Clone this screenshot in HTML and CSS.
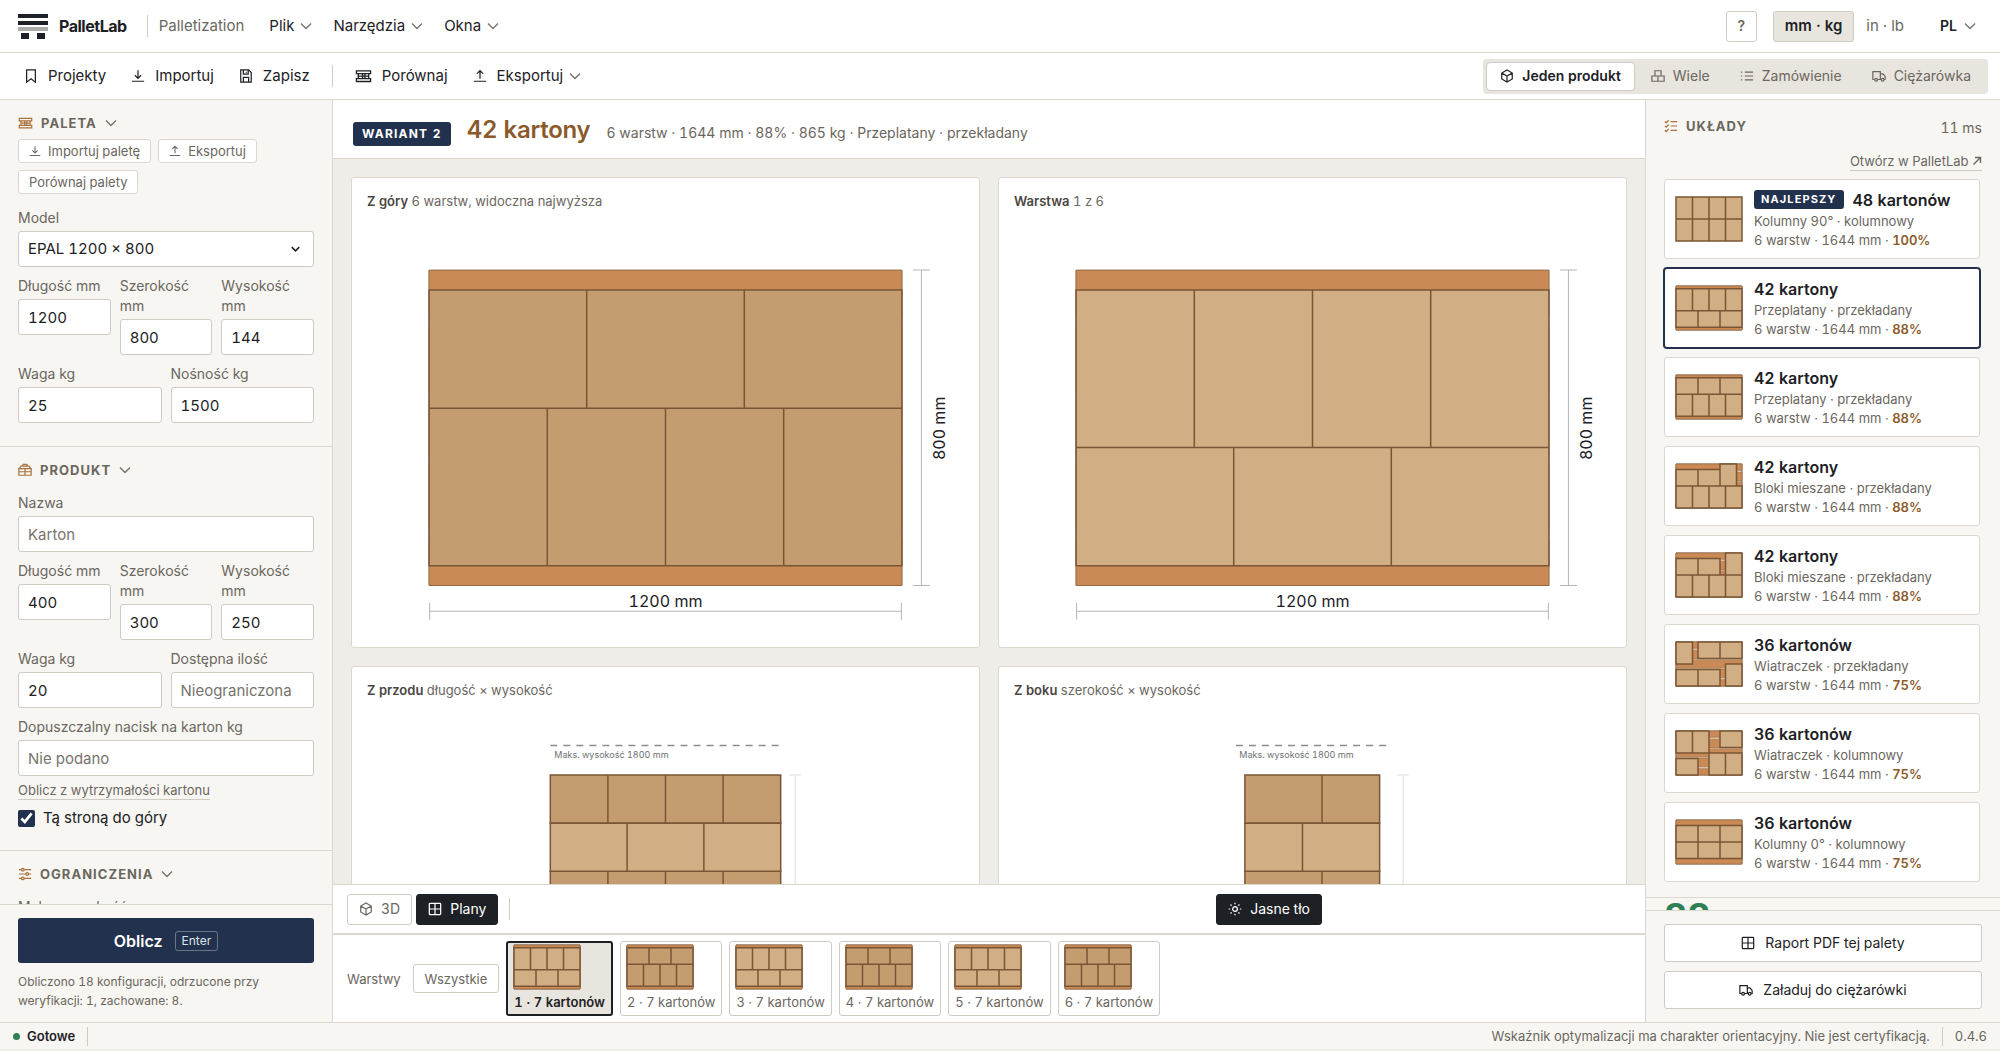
FILE: index.html
```html
<!DOCTYPE html>
<html lang="pl">
<head>
<meta charset="utf-8">
<title>PalletLab</title>
<meta name="viewport" content="width=device-width, initial-scale=1">
<link rel="stylesheet" href="styles.css">
</head>
<body>
<svg class="defs" aria-hidden="true">
  <symbol id="i-chevron" viewBox="0 0 12 8"><path d="M1 1.500 6 6.500 11 1.500"/></symbol>
  <symbol id="i-bookmark" viewBox="0 0 16 16"><path d="M3 1h10v14l-5-3.800L3 15z"/></symbol>
  <symbol id="i-download" viewBox="0 0 16 16"><path d="M8 1.500v9M4.500 7.200 8 10.700l3.500-3.500M1 14h14"/></symbol>
  <symbol id="i-upload" viewBox="0 0 16 16"><path d="M8 11V2M4.500 5.300 8 1.800l3.500 3.500M1 14h14"/></symbol>
  <symbol id="i-save" viewBox="0 0 16 16"><path d="M2 1h9l3 3v11H2zM5 1.300v4.500h5.500v-4.500M8.300 3v1.200M5 14.700V9.500h6v5.200"/></symbol>
  <symbol id="i-pallet" viewBox="0 0 18 14"><path d="M1.500 1.500h15v3h-15zM1.500 9.800h15v3h-15zM3.500 4.500v5.300M8 4.500v5.300M10.500 4.500v5.300M14.500 4.500v5.300M3.500 7.200h11"/></symbol>
  <symbol id="i-product" viewBox="0 0 16 16"><path d="M1 6.500h14V14H1zM1.500 6.500 3.500 3.500h9l2 3M5 3.500 6 1.500h4l1 2M8 6.500V14M1 10h14"/></symbol>
  <symbol id="i-sliders" viewBox="0 0 16 16"><path d="M1 3h3M7 3h8M1 8h8M12 8h3M1 13h3M7 13h8"/><circle cx="5.500" cy="3" r="1.500"/><circle cx="10.500" cy="8" r="1.500"/><circle cx="5.500" cy="13" r="1.500"/></symbol>
  <symbol id="i-cube" viewBox="0 0 16 16"><path d="M8 1.200 14 4.600v6.800L8 14.800 2 11.400V4.600zM2 4.600 8 8l6-3.400M8 8v6.800"/></symbol>
  <symbol id="i-boxes" viewBox="0 0 16 16"><path d="M4.500 2h7v6h-7zM1 8h7v6H1zM8 8h7v6H8z"/></symbol>
  <symbol id="i-list" viewBox="0 0 16 16"><path d="M5.500 3.500H15M5.500 8H15M5.500 12.500H15M1 3.500h1.500M1 8h1.500M1 12.500h1.500"/></symbol>
  <symbol id="i-checks" viewBox="0 0 16 16"><path d="M7.500 3H15M7.500 8H15M7.500 13H15M1 2.800l1.500 1.500L5.500 1.300M1 7.800l1.500 1.500 3-3M1 12.800l1.500 1.500 3-3"/></symbol>
  <symbol id="i-truck" viewBox="0 0 16 16"><path d="M3 12H1V3h8.500v9H6.500M9.500 5.500h3L15 8.500V12h-1M10.500 12h-1"/><circle cx="4.700" cy="12.300" r="1.600"/><circle cx="12.200" cy="12.300" r="1.600"/></symbol>
  <symbol id="i-grid" viewBox="0 0 16 16"><path d="M2.500 1.500h11q1 0 1 1v11q0 1-1 1h-11q-1 0-1-1v-11q0-1 1-1zM8 1.500v13M1.500 8h13"/></symbol>
  <symbol id="i-sun" viewBox="0 0 16 16"><circle cx="8" cy="8" r="2.700"/><path d="M8 .8v1.700M8 13.500v1.700M.8 8h1.700M13.500 8h1.700M2.900 2.900l1.200 1.200M11.900 11.900l1.200 1.200M2.900 13.100l1.200-1.200M11.900 4.100l1.200-1.200"/></symbol>
  <symbol id="i-out" viewBox="0 0 10 10"><path d="M1.500 8.500l7-7M3 1.500h5.500V7"/></symbol>

  <symbol id="deck" viewBox="0 0 1200 800" overflow="visible">
    <g class="gap"><path d="M0 0h1200v800H0z"/></g>
    <g class="board"><path d="M0 0h1200v115H0zM0 148h1200v160H0zM0 330h1200v140H0zM0 492h1200v160H0zM0 685h1200v115H0z"/></g>
  </symbol>
  <symbol id="lay-43" viewBox="0 0 1200 800" overflow="visible">
    <use href="#deck" width="1200" height="800"/>
    <path class="tile" d="M0 50h300v400H0zM300 50h300v400H300zM600 50h300v400H600zM900 50h300v400H900zM0 450h400v300H0zM400 450h400v300H400zM800 450h400v300H800z"/>
  </symbol>
  <symbol id="lay-34" viewBox="0 0 1200 800" overflow="visible">
    <use href="#deck" width="1200" height="800"/>
    <path class="tile" d="M0 50h400v300H0zM400 50h400v300H400zM800 50h400v300H800zM0 350h300v400H0zM300 350h300v400H300zM600 350h300v400H600zM900 350h300v400H900z"/>
  </symbol>
  <symbol id="lay-col90" viewBox="0 0 1200 800" overflow="visible">
    <path class="tile" d="M0 0h300v400H0zM300 0h300v400H300zM600 0h300v400H600zM900 0h300v400H900zM0 400h300v400H0zM300 400h300v400H300zM600 400h300v400H600zM900 400h300v400H900z"/>
  </symbol>
  <symbol id="lay-mixa" viewBox="0 0 1200 800" overflow="visible">
    <use href="#deck" width="1200" height="800"/>
    <path class="tile" d="M0 100h400v300H0zM400 100h400v300H400zM800 0h300v400H800zM0 400h300v400H0zM300 400h300v400H300zM600 400h300v400H600zM900 400h300v400H900z"/>
  </symbol>
  <symbol id="lay-mixb" viewBox="0 0 1200 800" overflow="visible">
    <use href="#deck" width="1200" height="800"/>
    <path class="tile" d="M0 100h400v300H0zM400 100h400v300H400zM900 0h300v400H900zM0 400h300v400H0zM300 400h300v400H300zM600 400h300v400H600zM900 400h300v400H900z"/>
  </symbol>
  <symbol id="lay-pina" viewBox="0 0 1200 800" overflow="visible">
    <use href="#deck" width="1200" height="800"/>
    <path class="tile" d="M0 0h300v400H0zM400 0h400v300H400zM800 0h400v300H800zM0 500h400v300H0zM400 500h400v300H400zM900 400h300v400H900z"/>
  </symbol>
  <symbol id="lay-pinb" viewBox="0 0 1200 800" overflow="visible">
    <use href="#deck" width="1200" height="800"/>
    <path class="tile" d="M0 0h300v400H0zM300 0h300v400H300zM800 0h400v300H800zM0 500h400v300H0zM600 400h300v400H600zM900 400h300v400H900z"/>
  </symbol>
  <symbol id="lay-col0" viewBox="0 0 1200 800" overflow="visible">
    <use href="#deck" width="1200" height="800"/>
    <path class="tile" d="M0 100h400v300H0zM400 100h400v300H400zM800 100h400v300H800zM0 400h400v300H0zM400 400h400v300H400zM800 400h400v300H800z"/>
  </symbol>
</svg>

<div class="app">
  <header class="topbar">
    <svg class="logo" viewBox="0 0 30 25" aria-hidden="true"><path fill="#1d2125" d="M0 0h30v4H0zM0 7h30v4H0zM3 19h8v6H3zM19 19h8v6h-8z"/><path fill="#aeacab" d="M0 13h30v4H0z"/></svg>
    <strong class="brand">PalletLab</strong>
    <span class="rule brand-rule"></span>
    <span class="product">Palletization</span>
    <nav class="menus">
      <button class="menu">Plik <svg class="chev"><use href="#i-chevron"/></svg></button>
      <button class="menu">Narzędzia <svg class="chev"><use href="#i-chevron"/></svg></button>
      <button class="menu">Okna <svg class="chev"><use href="#i-chevron"/></svg></button>
    </nav>
    <button class="help">?</button>
    <div class="units">
      <button class="unit on">mm · kg</button>
      <button class="unit">in · lb</button>
    </div>
    <div class="lang">
      <select aria-label="Język"><option>PL</option></select>
      <svg class="chev"><use href="#i-chevron"/></svg>
    </div>
  </header>

  <div class="toolbar">
    <button class="tool"><svg class="ic"><use href="#i-bookmark"/></svg>Projekty</button>
    <button class="tool"><svg class="ic"><use href="#i-download"/></svg>Importuj</button>
    <button class="tool"><svg class="ic"><use href="#i-save"/></svg>Zapisz</button>
    <span class="rule"></span>
    <button class="tool"><svg class="ic wide"><use href="#i-pallet"/></svg>Porównaj</button>
    <button class="tool"><svg class="ic"><use href="#i-upload"/></svg>Eksportuj<svg class="chev"><use href="#i-chevron"/></svg></button>
    <div class="modes">
      <button class="mode on"><svg class="ic"><use href="#i-cube"/></svg>Jeden produkt</button>
      <button class="mode"><svg class="ic"><use href="#i-boxes"/></svg>Wiele</button>
      <button class="mode"><svg class="ic"><use href="#i-list"/></svg>Zamówienie</button>
      <button class="mode"><svg class="ic"><use href="#i-truck"/></svg>Ciężarówka</button>
    </div>
  </div>

  <div class="work">
    <aside class="side">
      <form class="side-scroll">
        <section class="group">
          <h2 class="cap"><svg class="ic wide accent"><use href="#i-pallet"/></svg>Paleta<svg class="chev"><use href="#i-chevron"/></svg></h2>
          <div class="minis">
            <button type="button" class="mini"><svg class="ic"><use href="#i-download"/></svg>Importuj paletę</button>
            <button type="button" class="mini"><svg class="ic"><use href="#i-upload"/></svg>Eksportuj</button>
            <button type="button" class="mini">Porównaj palety</button>
          </div>
          <label class="field">Model
            <span class="pick"><select class="box"><option>EPAL 1200 × 800</option></select><svg class="chev"><use href="#i-chevron"/></svg></span>
          </label>
          <div class="cols three">
            <label class="field">Długość mm<input class="box" value="1200"></label>
            <label class="field">Szerokość mm<input class="box" value="800"></label>
            <label class="field">Wysokość mm<input class="box" value="144"></label>
          </div>
          <div class="cols">
            <label class="field">Waga kg<input class="box" value="25"></label>
            <label class="field">Nośność kg<input class="box" value="1500"></label>
          </div>
        </section>
        <section class="group">
          <h2 class="cap"><svg class="ic accent"><use href="#i-product"/></svg>Produkt<svg class="chev"><use href="#i-chevron"/></svg></h2>
          <label class="field">Nazwa<input class="box" placeholder="Karton"></label>
          <div class="cols three">
            <label class="field">Długość mm<input class="box" value="400"></label>
            <label class="field">Szerokość mm<input class="box" value="300"></label>
            <label class="field">Wysokość mm<input class="box" value="250"></label>
          </div>
          <div class="cols">
            <label class="field">Waga kg<input class="box" value="20"></label>
            <label class="field">Dostępna ilość<input class="box" placeholder="Nieograniczona"></label>
          </div>
          <label class="field">Dopuszczalny nacisk na karton kg<input class="box" placeholder="Nie podano"></label>
          <a class="link" href="#wytrzymalosc">Oblicz z wytrzymałości kartonu</a>
          <label class="check"><input type="checkbox" checked>Tą stroną do góry</label>
        </section>
        <section class="group">
          <h2 class="cap"><svg class="ic accent"><use href="#i-sliders"/></svg>Ograniczenia<svg class="chev"><use href="#i-chevron"/></svg></h2>
          <label class="field">Maks. wysokość mm<input class="box" value="1800"></label>
        </section>
      </form>
      <div class="side-foot">
        <button class="run">Oblicz <kbd>Enter</kbd></button>
        <p class="note">Obliczono 18 konfiguracji, odrzucone przy weryfikacji: 1, zachowane: 8.</p>
      </div>
    </aside>

    <main class="main">
      <header class="head">
        <span class="badge">Wariant 2</span>
        <h1 class="title">42 kartony</h1>
        <p class="facts">6 warstw · 1644 mm · 88% · 865 kg · Przeplatany · przekładany</p>
      </header>
      <div class="canvas">
        <figure class="view">
          <figcaption><b>Z góry</b> 6 warstw, widoczna najwyższa</figcaption>
          <svg class="plan dark" viewBox="0 0 596 414">
            <use href="#lay-34" x="62" y="53" width="472" height="315"/>
            <path class="dim" d="M553.500 53v315M545 53h17M545 368h17M62 393.500h472M62.500 385v17M533.500 385v17"/>
            <text class="dim-text" x="298" y="389">1200 mm</text>
            <text class="dim-text" transform="translate(577 211) rotate(-90)">800 mm</text>
          </svg>
        </figure>
        <figure class="view">
          <figcaption><b>Warstwa</b> 1 z 6</figcaption>
          <svg class="plan" viewBox="0 0 596 414">
            <use href="#lay-43" x="62" y="53" width="472" height="315"/>
            <path class="dim" d="M553.500 53v315M545 53h17M545 368h17M62 393.500h472M62.500 385v17M533.500 385v17"/>
            <text class="dim-text" x="298" y="389">1200 mm</text>
            <text class="dim-text" transform="translate(577 211) rotate(-90)">800 mm</text>
          </svg>
        </figure>
        <figure class="view">
          <figcaption><b>Z przodu</b> długość × wysokość</figcaption>
          <svg class="plan" viewBox="0 0 596 414">
            <path class="limit" d="M183 39.500h230"/>
            <text class="limit-text" x="187" y="52">Maks. wysokość 1800 mm</text>
            <g class="dark"><path class="tile" d="M183 69h57.500v48H183zM240.500 69H298v48h-57.500zM298 69h57.500v48H298zM355.500 69H413v48h-57.500zM183 165h57.500v48H183zM240.500 165H298v48h-57.500zM298 165h57.500v48H298zM355.500 165H413v48h-57.500zM183 261h57.500v48H183zM240.500 261H298v48h-57.500zM298 261h57.500v48H298zM355.500 261H413v48h-57.500z"/></g>
            <path class="tile" d="M183 117h76.700v48H183zM259.700 117h76.600v48h-76.600zM336.300 117H413v48h-76.700zM183 213h76.700v48H183zM259.700 213h76.600v48h-76.600zM336.300 213H413v48h-76.700zM183 309h76.700v48H183zM259.700 309h76.600v48h-76.600zM336.300 309H413v48h-76.700z"/>
            <g class="board"><path d="M183 357h230v8H183zM183 365h28v19h-28zM284 365h28v19h-28zM385 365h28v19h-28z"/></g>
            <path class="dim faint" d="M427.500 69v315M421 69h12M421 384h12"/>
          </svg>
        </figure>
        <figure class="view">
          <figcaption><b>Z boku</b> szerokość × wysokość</figcaption>
          <svg class="plan" viewBox="0 0 596 414">
            <path class="limit" d="M221.500 39.500h153"/>
            <text class="limit-text" x="225" y="52">Maks. wysokość 1800 mm</text>
            <g class="dark"><path class="tile" d="M230.500 69h77v48h-77zM307.500 69H365v48h-57.500zM230.500 165h77v48h-77zM307.500 165H365v48h-57.500zM230.500 261h77v48h-77zM307.500 261H365v48h-57.500z"/></g>
            <path class="tile" d="M230.500 117H288v48h-57.500zM288 117h77v48h-77zM230.500 213H288v48h-57.500zM288 213h77v48h-77zM230.500 309H288v48h-57.500zM288 309h77v48h-77z"/>
            <g class="board"><path d="M221.500 357h153v8h-153zM221.500 365h19v19h-19zM284 365h28v19h-28zM355.500 365h19v19h-19z"/></g>
            <path class="dim faint" d="M388.500 69v315M382 69h12M382 384h12"/>
          </svg>
        </figure>
      </div>
      <div class="viewbar">
        <button class="vbtn"><svg class="ic"><use href="#i-cube"/></svg>3D</button>
        <button class="vbtn on"><svg class="ic"><use href="#i-grid"/></svg>Plany</button>
        <span class="rule"></span>
        <button class="vbtn on light"><svg class="ic"><use href="#i-sun"/></svg>Jasne tło</button>
      </div>
      <div class="layers">
        <span class="layers-name">Warstwy</span>
        <button class="all">Wszystkie</button>
        <button class="layer on"><svg class="thumb"><use href="#lay-43"/></svg>1 · 7 kartonów</button>
        <button class="layer"><svg class="thumb dark"><use href="#lay-34"/></svg>2 · 7 kartonów</button>
        <button class="layer"><svg class="thumb"><use href="#lay-43"/></svg>3 · 7 kartonów</button>
        <button class="layer"><svg class="thumb dark"><use href="#lay-34"/></svg>4 · 7 kartonów</button>
        <button class="layer"><svg class="thumb"><use href="#lay-43"/></svg>5 · 7 kartonów</button>
        <button class="layer"><svg class="thumb dark"><use href="#lay-34"/></svg>6 · 7 kartonów</button>
      </div>
    </main>

    <aside class="results">
      <div class="results-scroll">
        <div class="results-head">
          <h2 class="cap"><svg class="ic accent"><use href="#i-checks"/></svg>Układy</h2>
          <span class="time">11 ms</span>
        </div>
        <a class="link open" href="#palletlab">Otwórz w PalletLab <svg class="out"><use href="#i-out"/></svg></a>
        <div class="cards">
          <button class="card"><svg class="thumb"><use href="#lay-col90"/></svg><span class="info"><span class="name"><span class="badge small">Najlepszy</span>48 kartonów</span><span>Kolumny 90° · kolumnowy</span><span>6 warstw · 1644 mm · <b>100%</b></span></span></button>
          <button class="card on"><svg class="thumb"><use href="#lay-43"/></svg><span class="info"><span class="name">42 kartony</span><span>Przeplatany · przekładany</span><span>6 warstw · 1644 mm · <b>88%</b></span></span></button>
          <button class="card"><svg class="thumb"><use href="#lay-34"/></svg><span class="info"><span class="name">42 kartony</span><span>Przeplatany · przekładany</span><span>6 warstw · 1644 mm · <b>88%</b></span></span></button>
          <button class="card"><svg class="thumb"><use href="#lay-mixa"/></svg><span class="info"><span class="name">42 kartony</span><span>Bloki mieszane · przekładany</span><span>6 warstw · 1644 mm · <b>88%</b></span></span></button>
          <button class="card"><svg class="thumb"><use href="#lay-mixb"/></svg><span class="info"><span class="name">42 kartony</span><span>Bloki mieszane · przekładany</span><span>6 warstw · 1644 mm · <b>88%</b></span></span></button>
          <button class="card"><svg class="thumb"><use href="#lay-pina"/></svg><span class="info"><span class="name">36 kartonów</span><span>Wiatraczek · przekładany</span><span>6 warstw · 1644 mm · <b>75%</b></span></span></button>
          <button class="card"><svg class="thumb"><use href="#lay-pinb"/></svg><span class="info"><span class="name">36 kartonów</span><span>Wiatraczek · kolumnowy</span><span>6 warstw · 1644 mm · <b>75%</b></span></span></button>
          <button class="card"><svg class="thumb"><use href="#lay-col0"/></svg><span class="info"><span class="name">36 kartonów</span><span>Kolumny 0° · kolumnowy</span><span>6 warstw · 1644 mm · <b>75%</b></span></span></button>
        </div>
        <div class="score">88</div>
      </div>
      <div class="results-foot">
        <button class="act"><svg class="ic"><use href="#i-grid"/></svg>Raport PDF tej palety</button>
        <button class="act"><svg class="ic"><use href="#i-truck"/></svg>Załaduj do ciężarówki</button>
      </div>
    </aside>
  </div>

  <footer class="status">
    <span class="dot"></span><strong>Gotowe</strong><span class="rule"></span>
    <span class="legal">Wskaźnik optymalizacji ma charakter orientacyjny. Nie jest certyfikacją.</span>
    <span class="rule"></span><span>0.4.6</span>
  </footer>
</div>
</body>
</html>
```

FILE: styles.css
```css
:root {
  --ink: #1d2125;
  --muted: #6b665e;
  --line: #dcd8d0;
  --line-strong: #cfcac2;
  --paper: #f7f6f2;
  --sunk: #e8e5df;
  --canvas: #eeede8;
  --navy: #22314d;
  --brown: #8b5a2b;
  --tile: #d2ae84;
}

* { box-sizing: border-box; }

body {
  margin: 0;
  background: var(--canvas);
  color: var(--ink);
  font: 15px/20px Inter, "Liberation Sans", sans-serif;
  font-variant-numeric: tabular-nums;
}

button, input, select { font: inherit; font-variant-numeric: inherit; color: inherit; margin: 0; }
button { display: flex; align-items: center; background: none; border: 0; padding: 0; white-space: nowrap; }
h1, h2, p, figure { margin: 0; }

.defs { position: absolute; width: 0; height: 0; }
svg { display: block; flex: none; }
.ic, .chev, .out { fill: none; stroke: currentColor; stroke-width: 1.4px; }
.ic { width: 14px; height: 14px; }
.ic.wide { width: 17px; height: 14px; }
.chev { width: 12px; height: 8px; stroke: #77736c; }
.out { width: 10px; height: 10px; display: inline-block; }
.accent { color: #a9713d; }
.rule { width: 1px; height: 22px; background: var(--line-strong); flex: none; }

.app { display: flex; flex-direction: column; height: 100vh; padding-bottom: 2px; }

/* top bar */
.topbar { display: flex; align-items: center; height: 53px; padding: 0 18px; background: #fff; border-bottom: 1px solid var(--line); flex: none; }
.logo { width: 30px; height: 25px; margin-right: 11px; }
.brand { font-size: 16px; font-weight: 700; letter-spacing: -0.03em; }
.brand-rule { margin: 0 11px 0 20px; }
.product { color: var(--muted); }
.menus { display: flex; gap: 21px; margin-left: 25px; margin-right: auto; }
.menu { gap: 6px; }
.help { justify-content: center; width: 31px; height: 31px; border: 1px solid var(--line-strong); border-radius: 3px; color: var(--muted); font-size: 14px; font-weight: 600; }
.units { display: flex; margin-left: 16px; }
.unit { height: 31px; padding: 0 11px; border: 1px solid transparent; border-radius: 3px; color: var(--muted); }
.unit.on { background: var(--sunk); border-color: var(--line-strong); color: var(--ink); font-weight: 600; }
.lang { display: grid; align-items: center; width: 36px; margin-left: 24px; margin-right: 6px; }
.lang > * { grid-area: 1 / 1; }
.lang select { appearance: none; border: 0; background: none; padding: 0; font-size: 14px; font-weight: 600; }
.lang .chev { justify-self: end; pointer-events: none; }

/* tool bar */
.toolbar { display: flex; align-items: center; height: 47px; padding: 0 12px 0 24px; background: #fff; border-bottom: 1px solid var(--line); flex: none; }
.tool { gap: 10px; margin-right: 25px; }
.tool .chev { margin-left: -4px; }
.toolbar .rule { margin-left: -3px; margin-right: 22px; }
.modes { display: flex; gap: 2px; padding: 3px; margin-left: auto; background: var(--sunk); border-radius: 4px; }
.mode { gap: 8px; height: 29px; padding: 0 13px; border: 1px solid transparent; border-radius: 4px; color: var(--muted); font-size: 14px; }
.mode.on { background: #fff; border-color: var(--line-strong); color: var(--ink); font-weight: 600; }

/* three columns */
.work { display: grid; grid-template-columns: 333px minmax(0, 1fr) 355px; flex: 1; min-height: 0; }

.side { display: flex; flex-direction: column; min-height: 0; background: var(--paper); border-right: 1px solid var(--line); }
.side-scroll { flex: 1; min-height: 0; overflow: hidden; }
.group { display: flex; flex-direction: column; gap: 9px; padding: 13px 18px 23px; border-bottom: 1px solid var(--line); }
.cap { display: flex; align-items: center; gap: 8px; height: 20px; margin-bottom: 4px; font-size: 13px; font-weight: 700; letter-spacing: 0.08em; text-transform: uppercase; color: var(--muted); }
.cap .wide { width: 15px; }
.minis { display: flex; flex-wrap: wrap; gap: 7px; margin: -7px 0 5px; }
.mini { gap: 7px; height: 24px; padding: 0 10px; background: #fff; border: 1px solid var(--line); border-radius: 3px; color: var(--muted); font-size: 13px; }
.mini .ic { width: 12px; height: 12px; }
.field { display: flex; flex-direction: column; gap: 3px; font-size: 14px; color: var(--muted); min-width: 0; }
.cols { display: grid; grid-template-columns: repeat(2, minmax(0, 1fr)); gap: 9px; align-items: start; }
.cols.three { grid-template-columns: repeat(3, minmax(0, 1fr)); }
.box { width: 100%; height: 36px; padding: 0 9px; background: #fff; border: 1px solid var(--line-strong); border-radius: 3px; font-size: 15px; color: var(--ink); appearance: none; }
.box::placeholder { color: #77736c; opacity: 1; }
.pick { display: grid; align-items: center; }
.pick > * { grid-area: 1 / 1; }
.pick .chev { justify-self: end; width: 9px; height: 6px; margin-right: 14px; stroke: var(--ink); stroke-width: 2px; pointer-events: none; }
.link { align-self: flex-start; font-size: 13px; line-height: 17px; color: var(--muted); text-decoration: none; border-bottom: 1px solid var(--line-strong); }
.group .link { margin-top: -3px; }
.check { display: flex; align-items: center; gap: 8px; height: 18px; }
.check input { width: 17px; height: 17px; accent-color: var(--navy); }
.side-foot { padding: 13px 18px 12px; border-top: 1px solid var(--line); }
.run { justify-content: center; gap: 12px; width: 100%; height: 45px; border-radius: 3px; background: var(--navy); color: #fff; font-size: 16px; font-weight: 600; }
.run kbd { padding: 0 6px; border: 1px solid #6b7689; border-radius: 3px; font: 12px/18px Inter, sans-serif; color: #dfe2e8; }
.note { margin-top: 9px; font-size: 12px; line-height: 19px; color: var(--muted); }

/* main column */
.main { display: flex; flex-direction: column; min-width: 0; min-height: 0; background: #fff; }
.head { display: flex; align-items: baseline; height: 59px; padding: 15px 20px; border-bottom: 1px solid var(--line); flex: none; }
.badge { padding: 0 9px; border-radius: 3px; background: var(--navy); color: #fff; font-size: 12px; line-height: 24px; font-weight: 700; letter-spacing: 0.1em; text-transform: uppercase; }
.title { margin: 0 16px; font-size: 24px; line-height: 30px; font-weight: 600; letter-spacing: -0.01em; color: var(--brown); }
.facts { font-size: 14px; color: var(--muted); }
.canvas { display: grid; grid-template-columns: repeat(2, minmax(0, 1fr)); gap: 18px; padding: 18px; flex: 1; min-height: 0; overflow: hidden; align-content: start; background: var(--canvas); }
.view { padding: 13px 15px 15px; background: #fff; border: 1px solid var(--line); border-radius: 3px; }
.view figcaption { margin-bottom: 6px; font-size: 13px; color: var(--muted); }
.view figcaption b { font-weight: 600; color: #4a463f; }
.plan { width: 100%; height: auto; }

.dark { --tile: #c49c70; }
.tile { fill: var(--tile); stroke: #7a5535; stroke-width: 1.5px; vector-effect: non-scaling-stroke; }
.board path { fill: #c98a55; stroke: #8a5a34; stroke-width: 0.5px; vector-effect: non-scaling-stroke; }
.gap path { fill: #f0d8c0; stroke: #7a5535; stroke-width: 1px; vector-effect: non-scaling-stroke; }
.dim { fill: none; stroke: #b5b5b5; stroke-width: 1px; }
.dim.faint { stroke: #dedede; }
.dim-text { font-size: 16px; fill: var(--ink); text-anchor: middle; }
.limit { stroke: #8a8c90; stroke-width: 1.5px; stroke-dasharray: 7 6; }
.limit-text { font-size: 9px; fill: #6d7075; }

.viewbar { display: flex; align-items: center; height: 49px; padding: 0 14px; border-top: 1px solid var(--line); flex: none; }
.vbtn { gap: 8px; height: 31px; padding: 0 11px; margin-right: 4px; border: 1px solid var(--line-strong); border-radius: 3px; font-size: 14px; color: var(--muted); }
.vbtn.on { background: var(--ink); border-color: var(--ink); color: #fff; }
.viewbar .rule { margin-left: 7px; }
.vbtn.light { margin-left: auto; margin-right: 309px; }

.layers { display: flex; align-items: center; gap: 7px; height: 89px; padding: 0 14px; border-top: 2px solid var(--line); flex: none; }
.layers-name { margin-right: 5px; font-size: 13px; color: var(--muted); }
.all { height: 29px; padding: 0 11px; border: 1px solid var(--line-strong); border-radius: 3px; font-size: 13px; color: var(--muted); }
.layer { flex-direction: column; align-items: flex-start; gap: 3px; height: 75px; padding: 3px 6px; border: 1px solid var(--line-strong); border-radius: 3px; font-size: 13px; color: var(--muted); }
.layer.on { padding: 2px 6px; border: 2px solid var(--ink); background: var(--sunk); color: var(--ink); font-weight: 600; }
.thumb { width: 66px; height: 44px; overflow: visible; }

/* results */
.results { display: flex; flex-direction: column; min-height: 0; background: var(--paper); border-left: 1px solid var(--line); }
.results-scroll { display: flex; flex-direction: column; flex: 1; min-height: 0; overflow: hidden; padding-top: 16px; }
.results-head { display: flex; justify-content: space-between; padding: 0 18px; height: 37px; flex: none; }
.time { margin-top: 2px; font-size: 14px; color: var(--muted); }
.link.open { align-self: flex-end; margin: 0 18px 8px 0; flex: none; }
.cards { display: flex; flex-direction: column; gap: 9px; padding: 0 20px 15px 18px; flex: none; }
.card { gap: 12px; height: 80px; padding: 0 11px; background: #fff; border: 1px solid var(--line); border-radius: 3px; text-align: left; }
.card.on { border-color: var(--navy); box-shadow: 0 0 0 1px var(--navy); }
.info { display: flex; flex-direction: column; font-size: 13px; line-height: 19px; color: var(--muted); }
.info b { font-weight: 600; color: var(--brown); }
.name { display: flex; align-items: center; gap: 9px; margin-bottom: 1px; font-size: 16px; line-height: 22px; font-weight: 600; color: var(--ink); }
.badge.small { padding: 0 7px; font-size: 11px; line-height: 19px; }
.score { padding: 1px 18px; border-top: 1px solid var(--line); font-size: 36px; line-height: 34px; font-weight: 700; color: #2f8054; }
.results-foot { display: flex; flex-direction: column; gap: 9px; padding: 13px 18px; border-top: 1px solid var(--line); }
.act { justify-content: center; gap: 10px; height: 38px; background: #fff; border: 1px solid var(--line-strong); border-radius: 3px; font-size: 14px; }

/* status bar */
.status { display: flex; align-items: center; height: 27px; padding: 0 13px; background: var(--paper); border-top: 1px solid var(--line); font-size: 13px; color: var(--muted); flex: none; }
.status strong { font-weight: 600; color: var(--ink); margin-left: 7px; }
.status .rule { height: 19px; margin: 0 12px; }
.dot { width: 7px; height: 7px; border-radius: 50%; background: #2f8054; }
.legal { margin-left: auto; }
```
